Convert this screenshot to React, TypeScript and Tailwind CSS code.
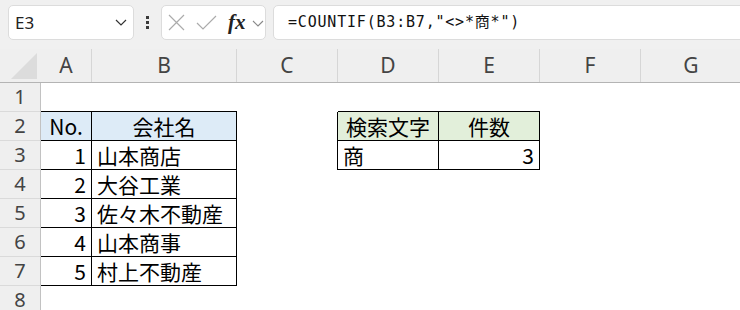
import React from "react";

const COLS = [
  { name: "A", w: "w-[51px]" },
  { name: "B", w: "w-[145px]" },
  { name: "C", w: "w-[101px]" },
  { name: "D", w: "w-[101px]" },
  { name: "E", w: "w-[101px]" },
  { name: "F", w: "w-[101px]" },
  { name: "G", w: "w-[101px]" },
];

type Cell = { t?: string; cls?: string };

const B = "border-b border-black";
const RB = "border-r border-b border-black";
const HEAD1 = "bg-[#ddebf7] justify-center " + RB;
const HEAD2 = "bg-[#e2efda] justify-center " + RB;
const NUM = "justify-end " + RB;
const TXT = "justify-start " + RB;

const ROWS: Cell[][] = [
  [{ cls: B }, { cls: B }, {}, { cls: B }, { cls: B }],
  [
    { t: "No.", cls: HEAD1 },
    { t: "会社名", cls: HEAD1 },
    { cls: "border-r border-black" },
    { t: "検索文字", cls: HEAD2 },
    { t: "件数", cls: HEAD2 },
  ],
  [
    { t: "1", cls: NUM },
    { t: "山本商店", cls: TXT },
    { cls: "border-r border-black" },
    { t: "商", cls: TXT },
    { t: "3", cls: NUM },
  ],
  [{ t: "2", cls: NUM }, { t: "大谷工業", cls: TXT }],
  [{ t: "3", cls: NUM }, { t: "佐々木不動産", cls: TXT }],
  [{ t: "4", cls: NUM }, { t: "山本商事", cls: TXT }],
  [{ t: "5", cls: NUM }, { t: "村上不動産", cls: TXT }],
  [],
];

const headFont = { fontFamily: '"Noto Sans", "Open Sans", sans-serif' };
const cellFont = { fontFamily: '"Noto Sans CJK JP", "Noto Sans", sans-serif' };

function Toolbar() {
  return (
    <div className="h-[49px] bg-[#f0f0f0] flex items-start pt-[5px] pl-[8px]">
      {/* name box */}
      <div className="w-[126px] h-[35px] shrink-0 bg-white border border-[#dcdcdc] rounded-[5px] flex items-center pl-[6px] pr-[5px]">
        <span className="text-[17px] leading-none text-[#222] flex-1" style={headFont}>
          E3
        </span>
        <svg width="12" height="7" viewBox="0 0 12 7" className="mr-[1px]">
          <path d="M1 1 L6 6 L11 1" fill="none" stroke="#333" strokeWidth="1.2" />
        </svg>
      </div>
      {/* kebab */}
      <div className="w-[27px] h-[35px] shrink-0 flex flex-col items-center justify-center gap-[2px]">
        <span className="w-[3px] h-[3px] bg-[#3a3a3a]" />
        <span className="w-[3px] h-[3px] bg-[#3a3a3a]" />
        <span className="w-[3px] h-[3px] bg-[#3a3a3a]" />
      </div>
      {/* cancel / enter / fx */}
      <div className="w-[105px] h-[35px] shrink-0 bg-white border border-[#dcdcdc] rounded-[5px] flex items-center">
        <svg width="17" height="17" viewBox="0 0 17 17" className="ml-[6px]">
          <path d="M1 1 L16 16 M16 1 L1 16" stroke="#ababab" strokeWidth="1.2" />
        </svg>
        <svg width="21" height="15" viewBox="0 0 21 15" className="ml-[11px]">
          <path d="M1 8 L7 14 L20 1" fill="none" stroke="#ababab" strokeWidth="1.2" />
        </svg>
        <span
          className="ml-[11px] text-[21px] leading-none italic font-bold text-[#222]"
          style={{ fontFamily: '"Liberation Serif", "DejaVu Serif", serif' }}
        >
          fx
        </span>
        <svg width="12" height="7" viewBox="0 0 12 7" className="ml-[6px] mt-[2px]">
          <path d="M1 1 L6 6 L11 1" fill="none" stroke="#888" strokeWidth="1.1" />
        </svg>
      </div>
      {/* formula */}
      <div className="ml-[7px] w-[480px] h-[35px] shrink-0 bg-white border border-[#dcdcdc] rounded-[5px] flex items-center pl-[14px]">
        <span
          className="text-[15px] leading-none tracking-[0.8px] text-[#111] whitespace-pre"
          style={{ fontFamily: '"DejaVu Sans Mono", "Noto Sans CJK JP", monospace' }}
        >
          =COUNTIF(B3:B7,"&lt;&gt;*商*")
        </span>
      </div>
    </div>
  );
}

export default function App() {
  return (
    <div className="w-[740px] h-[310px] overflow-hidden bg-white">
      <Toolbar />

      {/* column headers */}
      <div className="flex h-[34px] bg-[#efefef] border-b border-[#b4b4b4] box-border">
        <div className="w-[41px] shrink-0 h-full relative">
          <svg width="41" height="33" viewBox="0 0 41 33" className="absolute left-0 top-0">
            <polygon points="37,4 37,30 11,30" fill="#dcdcdc" />
          </svg>
        </div>
        {COLS.map((c) => (
          <div
            key={c.name}
            className={`${c.w} shrink-0 h-full box-border border-r border-[#d6d6d6] flex items-center justify-center text-[21px] leading-none text-[#444]`}
            style={headFont}
          >
            {c.name}
          </div>
        ))}
      </div>

      {/* rows */}
      {ROWS.map((row, r) => (
        <div key={r} className="flex h-[29px]">
          <div
            className="w-[41px] shrink-0 h-full box-border bg-[#efefef] border-r border-b border-r-[#c2c2c2] border-b-[#dadada] flex items-center justify-center text-[20px] leading-none text-[#444]"
            style={headFont}
          >
            {r + 1}
          </div>
          {COLS.map((c, i) => {
            const cell = row[i] ?? {};
            return (
              <div
                key={c.name}
                className={`${c.w} shrink-0 h-full box-border flex items-center px-[5px] text-[21px] leading-none text-black whitespace-nowrap ${cell.cls ?? ""}`}
                style={cellFont}
              >
                {cell.t}
              </div>
            );
          })}
        </div>
      ))}
    </div>
  );
}
